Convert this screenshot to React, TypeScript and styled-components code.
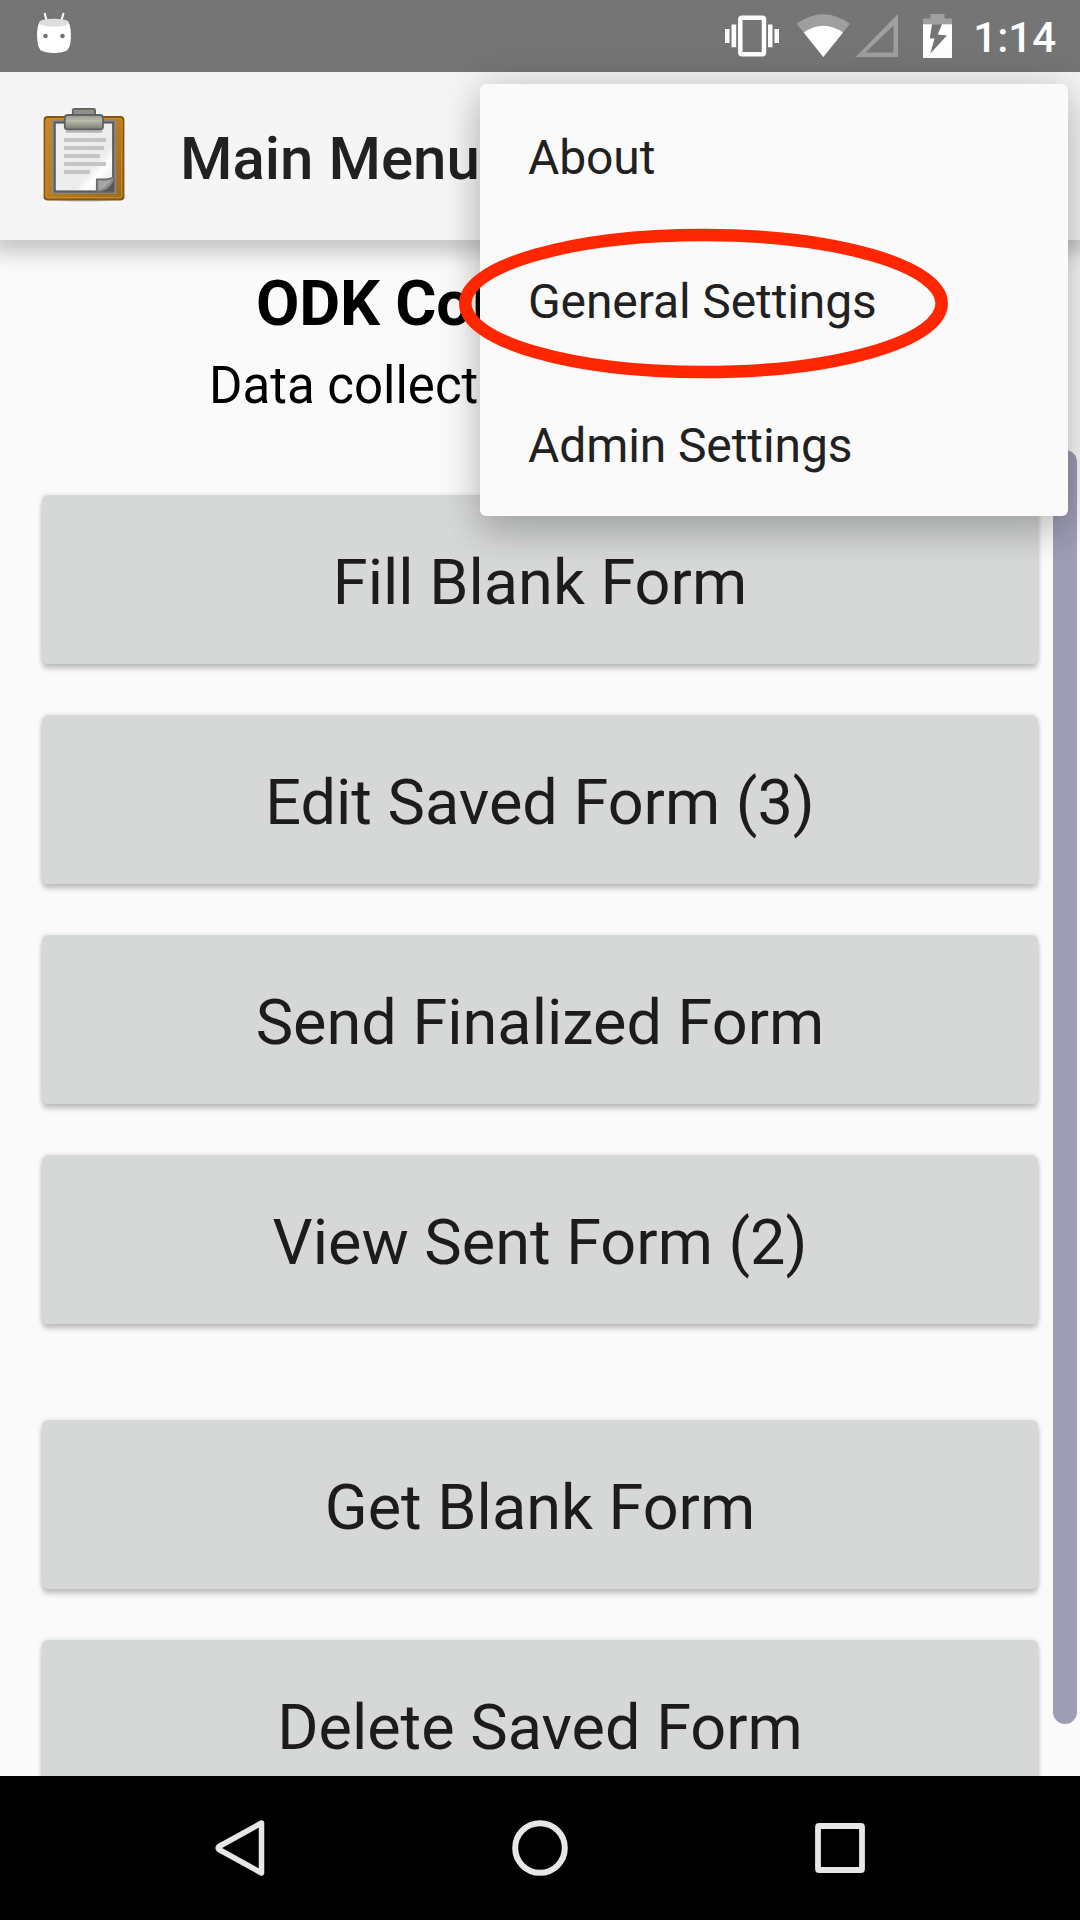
import React from "react";
import styled, { createGlobalStyle } from "styled-components";

const GlobalStyle = createGlobalStyle`
  * { box-sizing: border-box; }
  body { margin: 0; background: #fafafa; }
`;

const Screen = styled.div`
  position: relative;
  width: 1080px;
  height: 1920px;
  display: flex;
  flex-direction: column;
  overflow: hidden;
  background: #fafafa;
  font-family: Roboto, "Noto Sans", sans-serif;
`;

const StatusBar = styled.header`
  flex: 0 0 72px;
  min-height: 0;
  display: flex;
  align-items: center;
  padding: 0 24px 0 34px;
  background: #757575;
  z-index: 2;
`;

const StatusIcons = styled.div`
  display: flex;
  align-items: center;
  margin-left: auto;
`;

const Glyph = styled.svg<{ $gap?: number; $lift?: number }>`
  display: block;
  flex: none;
  margin-right: ${(p) => p.$gap ?? 0}px;
  margin-top: ${(p) => -(p.$lift ?? 0)}px;
`;

const Clock = styled.time`
  color: #fff;
  font-size: 42px;
  font-weight: 500;
  line-height: 68px;
  padding-top: 4px;
`;

const AppBar = styled.div`
  flex: 0 0 168px;
  display: flex;
  align-items: center;
  padding-left: 36px;
  background: #f5f5f5;
  box-shadow: 0 4px 20px 8px rgba(0, 0, 0, 0.22);
  z-index: 1;
`;

const AppTitle = styled.h1`
  margin: 0 0 0 48px;
  color: #212121;
  font-size: 60px;
  font-weight: 500;
  line-height: 70px;
  padding-top: 5px;
`;

const Content = styled.main`
  flex: 0 0 1536px;
  display: flex;
  overflow: hidden;
`;

const Page = styled.div`
  flex: 0 0 1053px;
  padding: 27px 15px 0 42px;
`;

const Heading = styled.div`
  height: 228px;
  color: #000;
`;

const ProductName = styled.div`
  padding-left: 214px;
  font-size: 63px;
  font-weight: 700;
  letter-spacing: -0.2px;
  line-height: 74px;
`;

const Tagline = styled.div`
  padding: 15px 0 0 167px;
  font-size: 51px;
  line-height: 60px;
`;

const ButtonGroup = styled.div`
  display: flex;
  flex-direction: column;
  gap: 51px;
  & + & { margin-top: 96px; }
`;

const MenuButton = styled.button`
  height: 169px;
  flex: none;
  border: 0;
  border-radius: 6px;
  padding: 7px 0 0;
  background: #d6d8d7;
  box-shadow: 0 5px 5px rgba(0, 0, 0, 0.2), 0 0 5px rgba(0, 0, 0, 0.12);
  color: #1c1c1c;
  font: 400 63px/74px Roboto, "Noto Sans", sans-serif;
`;

const ScrollThumb = styled.div`
  width: 24px;
  height: 1274px;
  margin-top: 210px;
  border-radius: 12px;
  background: #9e9db5;
`;

const NavBar = styled.nav`
  flex: 0 0 144px;
  display: flex;
  align-items: center;
  justify-content: space-between;
  padding: 0 210px;
  background: #000;
`;

const Popup = styled.div`
  position: absolute;
  left: 480px;
  top: 84px;
  width: 588px;
  height: 432px;
  border-radius: 6px;
  background: #fafafa;
  box-shadow: 0 20px 34px rgba(0, 0, 0, 0.14), 0 0 44px rgba(0, 0, 0, 0.18);
  z-index: 3;
`;

const PopupItem = styled.div`
  height: 144px;
  padding: 3px 48px 0;
  color: #212121;
  font-size: 48px;
  letter-spacing: -0.1px;
  line-height: 142px;
`;

const Highlight = styled.svg`
  position: absolute;
  left: 459px;
  top: 228px;
  z-index: 4;
`;

const Marshmallow = () => (
  <Glyph width="40" height="44" viewBox="34 11 40 44" $lift={6}>
    <path d="M44.8 13.8 L47 22 M63.4 13.8 L61 22" stroke="#fff" strokeWidth="2" strokeLinecap="round" />
    <path d="M39.5 22.5C37 26 37 34 37.2 38c.2 5 .8 9 3.3 12 5 4 22 4 27 0 2.500-3 3.100-7 3.300-12 .2-4 .2-12-2.300-15.500z" fill="#fff" />
    <ellipse cx="54" cy="22.700" rx="14.900" ry="4" fill="#dedede" />
    <circle cx="45.500" cy="36" r="2.300" fill="#757575" />
    <circle cx="62.500" cy="36" r="2.300" fill="#757575" />
  </Glyph>
);

const Vibrate = () => (
  <Glyph width="54" height="44" viewBox="725 14 54 44" $gap={17}>
    <path fill="#fff" d="M725 29h4.500v14H725zM731.500 24.500h4.700v22.800h-4.700zM768 24.500h4.500v22.800H768zM774.500 29h4.500v14h-4.500z" />
    <rect x="740.300" y="17.700" width="23.700" height="36.600" rx="1.800" fill="none" stroke="#fff" strokeWidth="4.500" />
  </Glyph>
);

const Wifi = () => (
  <Glyph width="54" height="44" viewBox="796 14 54 44" $gap={5}>
    <path fill="#9f9f9f" d="M796.500 23.800Q823.300 4.500 850 23.800L823.300 57z" />
    <path fill="#fff" d="M803.800 32.500Q823.300 19 843 32.500L823.300 57z" />
  </Glyph>
);

const Signal = () => (
  <Glyph width="43" height="44" viewBox="855 14 43 44" $gap={25}>
    <path fill="#9f9f9f" fillRule="evenodd" d="M855.500 57H898V14zM865.500 52.500L893.500 25.500V52.500z" />
  </Glyph>
);

const Battery = () => (
  <Glyph width="29" height="44" viewBox="923 14 29 44" $gap={21}>
    <path fill="#9f9f9f" d="M930.300 14h14.200v4.500H952V24.500H923V18.500h7.300z" />
    <path fill="#fff" fillRule="evenodd" d="M923 24.300h29V58h-29zM932 24.300L929.800 38.500H934.500L930.300 53.500L947 35.500L937.800 34.500L942 24.300z" />
  </Glyph>
);

const Clipboard = () => (
  <Glyph width="96" height="96" viewBox="36 107 96 96" $lift={2}>
    <defs>
      <linearGradient id="board" x1="0" y1="0" x2="1" y2="1">
        <stop offset="0" stopColor="#c98a2b" />
        <stop offset="0.500" stopColor="#ba7a1d" />
        <stop offset="1" stopColor="#9b6a1f" />
      </linearGradient>
      <linearGradient id="sheet" x1="0" y1="0" x2="1" y2="1">
        <stop offset="0" stopColor="#f0f0f0" />
        <stop offset="0.650" stopColor="#ececec" />
        <stop offset="0.750" stopColor="#fff" />
        <stop offset="1" stopColor="#dcdcdc" />
      </linearGradient>
      <linearGradient id="clip" x1="0" y1="0" x2="0" y2="1">
        <stop offset="0" stopColor="#9a9b8e" />
        <stop offset="0.400" stopColor="#b9baae" />
        <stop offset="1" stopColor="#77796b" />
      </linearGradient>
      <radialGradient id="ground">
        <stop offset="0.700" stopColor="#000" stopOpacity="0.200" />
        <stop offset="1" stopColor="#000" stopOpacity="0" />
      </radialGradient>
    </defs>
    <ellipse cx="84" cy="197" rx="46" ry="5.500" fill="url(#ground)" />
    <rect x="44.500" y="117" width="79" height="82.500" rx="3" fill="url(#board)" stroke="#85560f" strokeWidth="1.800" />
    <rect x="46.200" y="118.700" width="75.600" height="79" rx="2" fill="none" stroke="#d08f2c" strokeWidth="1" />
    <path d="M51.700 121.500Q51.700 120 53.500 120H114.500Q116 120 116 122V193.700H51.700z" fill="#8a8b88" />
    <rect x="54.700" y="122.500" width="58.500" height="69" fill="url(#sheet)" stroke="#5b5e60" strokeWidth="2.200" />
    <path fill="#c5c5c5" d="M64 138h42v4H64zM64 146h40v4H64zM64 154h36v4H64zM64 162h42v4H64zM64 170h26v4H64z" />
    <path d="M96.700 191.500V179.300H105Q111 178.800 113.800 176.500V191.500z" fill="#8a8a8a" stroke="#6b6b6b" strokeWidth="1.500" />
    <path d="M101 191.500Q110 189 113.800 180.500V191.500z" fill="#555" />
    <path d="M98.500 190V181H106Q109 180.800 111.500 179.500Q107 188 98.500 190z" fill="#a6a6a6" />
    <rect x="72.800" y="108.800" width="22.300" height="10" rx="1.500" fill="#8f9186" stroke="#5f6262" strokeWidth="1.800" />
    <rect x="65.500" y="131" width="37" height="1.800" fill="#777" opacity="0.450" />
    <rect x="64.800" y="115" width="38.200" height="14.500" rx="3" fill="url(#clip)" stroke="#5f6262" strokeWidth="1.800" />
  </Glyph>
);

const primary = ["Fill Blank Form", "Edit Saved Form (3)", "Send Finalized Form", "View Sent Form (2)"];
const secondary = ["Get Blank Form", "Delete Saved Form"];
const popupItems = ["About", "General Settings", "Admin Settings"];

export default function App() {
  return (
    <Screen>
      <GlobalStyle />
      <StatusBar>
        <Marshmallow />
        <StatusIcons>
          <Vibrate />
          <Wifi />
          <Signal />
          <Battery />
          <Clock>1:14</Clock>
        </StatusIcons>
      </StatusBar>
      <AppBar>
        <Clipboard />
        <AppTitle>Main Menu</AppTitle>
      </AppBar>
      <Content>
        <Page>
          <Heading>
            <ProductName>ODK Col</ProductName>
            <Tagline>Data collect</Tagline>
          </Heading>
          <ButtonGroup>
            {primary.map((label) => (
              <MenuButton key={label}>{label}</MenuButton>
            ))}
          </ButtonGroup>
          <ButtonGroup>
            {secondary.map((label) => (
              <MenuButton key={label}>{label}</MenuButton>
            ))}
          </ButtonGroup>
        </Page>
        <ScrollThumb />
      </Content>
      <NavBar>
        <Glyph width="60" height="60" viewBox="210 1818 60 60">
          <path d="M261.500 1823L219 1846.500Q217.500 1848 219 1849.500L261.500 1873z" fill="none" stroke="#e6e6e6" strokeWidth="5.500" strokeLinejoin="round" />
        </Glyph>
        <Glyph width="60" height="60" viewBox="510 1818 60 60">
          <circle cx="540" cy="1848" r="24.800" fill="none" stroke="#e6e6e6" strokeWidth="6" />
        </Glyph>
        <Glyph width="60" height="60" viewBox="810 1818 60 60">
          <rect x="818" y="1826" width="44" height="44" rx="1" fill="none" stroke="#e6e6e6" strokeWidth="5.800" />
        </Glyph>
      </NavBar>
      <Popup>
        {popupItems.map((label) => (
          <PopupItem key={label}>{label}</PopupItem>
        ))}
      </Popup>
      <Highlight width="490" height="151" viewBox="0 0 490 151">
        <ellipse cx="244.500" cy="75.500" rx="238.200" ry="68.500" fill="none" stroke="#ff2600" strokeWidth="12.500" />
      </Highlight>
    </Screen>
  );
}
